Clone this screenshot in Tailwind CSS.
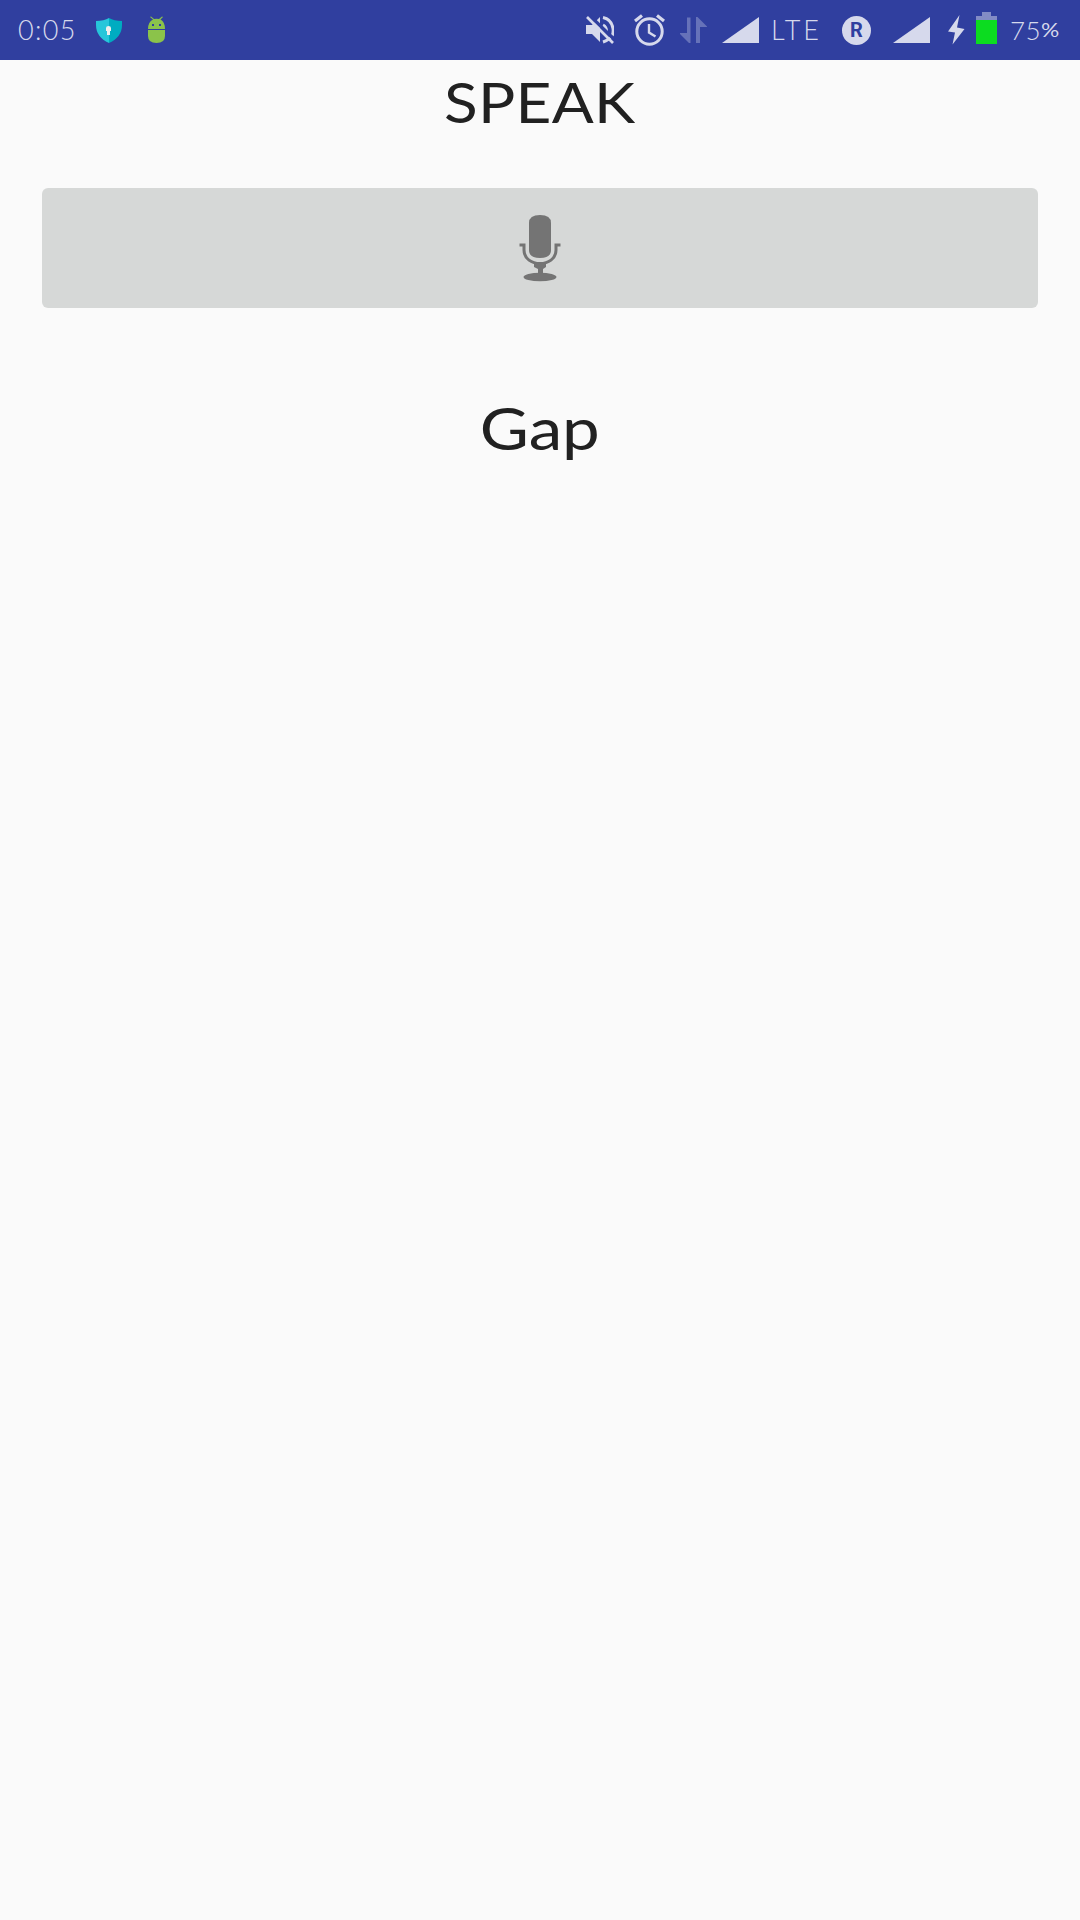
<!DOCTYPE html>
<html lang="en">
<head>
<meta charset="utf-8">
<title>Speak</title>
<script src="https://cdn.jsdelivr.net/npm/@tailwindcss/browser@4"></script>
</head>
<body class="min-h-screen bg-[#fafafa] font-['Lato',sans-serif] text-[#212121]">
<header class="flex h-[60px] items-center bg-[#303f9f] text-[27px] font-light leading-[60px] text-[#d6d9ec]">
  <span class="ml-[18px] w-[78px] whitespace-nowrap tracking-[1.300px]">0:05</span>
  <svg class="h-[60px] w-[26px]" viewBox="96 0 26 60">
    <path d="M96 21Q104 21 109 18V43Q96 37 96 25Z" fill="#26c6da"/>
    <path d="M109 18Q114 21 122 21V25Q122 37 109 43Z" fill="#00acc1"/>
    <path d="M106 28Q106 26 108.500 26Q111 26 111 28V31H110V35H107V31H106Z" fill="#eee"/>
  </svg>
  <svg class="ml-[26px] h-[60px] w-[17px]" viewBox="148 0 17 60" fill="#8bc34a">
    <path d="M148 29Q148 22 153 19.500L150 17L151 16.500L154 19Q156.500 18.500 159 19L162 16.500L163 17L160.500 19.500Q165 22 165 29ZM148 30H165V36Q165 43 156.500 43Q148 43 148 36Z"/>
    <path d="M152 24h2v2h-2zM159 24h2v2h-2z" fill="#303f9f"/>
  </svg>
  <svg class="ml-auto h-[60px] w-[28px]" viewBox="586 0 28 60">
    <path d="M586 25H592L600 17V42L592 34H586Z" fill="#d6d9ec"/>
    <path d="M603 25Q606.500 27 606.500 31M603 17.500C615 20 616 37 608 39.500Q606 41 603 42" fill="none" stroke="#d6d9ec" stroke-width="3"/>
    <path d="M589 15L616 41" stroke="#303f9f" stroke-width="3.500"/>
    <path d="M587 17L613 43" stroke="#d6d9ec" stroke-width="2.700"/>
  </svg>
  <svg class="ml-[20px] h-[60px] w-[31px]" viewBox="634 0 31 60" fill="none" stroke="#d6d9ec" stroke-width="3">
    <circle cx="649.500" cy="31.500" r="12.700"/>
    <path d="M635 21L642 15.500M657 15.500L664 21" stroke-width="3.200"/>
    <path d="M649 24V32.500L655.500 36.500" stroke-width="2.400"/>
  </svg>
  <svg class="ml-[15px] h-[60px] w-[27px]" viewBox="680 0 27 60" fill="#6672b9">
    <path d="M690.500 43H689L680 34V33H687V17.500H690.500ZM696 17H697.500L707 26.500V27H700V43H696Z"/>
  </svg>
  <svg class="ml-[15px] h-[60px] w-[37px]" viewBox="722 0 37 60" fill="#d6d9ec"><path d="M722 43L759 17V43Z"/></svg>
  <span class="ml-[12px] w-[71px] whitespace-nowrap tracking-[2.800px]">LTE</span>
  <span class="flex h-[29px] w-[29px] items-center justify-center rounded-full bg-[#d6d9ec] font-['Roboto',sans-serif] text-[20px] font-bold leading-none text-[#303f9f]">R</span>
  <svg class="ml-[22px] h-[60px] w-[37px]" viewBox="893 0 37 60" fill="#d6d9ec"><path d="M893 43L930 17V43Z"/></svg>
  <svg class="ml-[18px] h-[60px] w-[17px]" viewBox="948 0 17 60" fill="#d6d9ec"><path d="M959.500 15L957 27.500L964.500 29L952.500 44.500L955 32.500L948 31.500Z"/></svg>
  <svg class="ml-[11px] h-[60px] w-[21px]" viewBox="976 0 21 60">
    <path d="M976 16H982V12H991V16H997V20H976Z" fill="#838cc5"/>
    <path d="M976 20H997V44H976Z" fill="#0cdc20"/>
  </svg>
  <span class="ml-[13px] flex w-[70px] items-center whitespace-nowrap text-[26px]"><span class="tracking-[0.500px]">75</span><span class="origin-left scale-x-[1.2] text-[19px] font-normal">%</span></span>
</header>
<main class="flex flex-col items-center">
  <h1 class="h-[84px] scale-x-[1.09] whitespace-nowrap pt-[7px] text-[57px] leading-[68px] tracking-[0.200px]">SPEAK</h1>
  <button aria-label="Speak" class="mt-[44px] flex h-[120px] w-[996px] items-center justify-center rounded-[6px] bg-[#d6d8d7]">
    <svg class="h-[68px] w-[42px]" viewBox="519 214 42 68" fill="#747474">
      <path d="M529 223Q529 215 540 215Q551 215 551 223V250Q551 258 540 258Q529 258 529 250Z"/>
      <path d="M519.500 245H524V250C524 268 556 268 556 250V245H560.500" fill="none" stroke="#747474" stroke-width="3"/>
      <path d="M534 264H546V267L543 269V274H538V269L534 267Z"/>
      <ellipse cx="540" cy="277" rx="16.500" ry="4.300"/>
    </svg>
  </button>
  <p class="mt-[85px] scale-x-[1.16] whitespace-nowrap text-[58px] leading-[70px]">Gap</p>
</main>
</body>
</html>
